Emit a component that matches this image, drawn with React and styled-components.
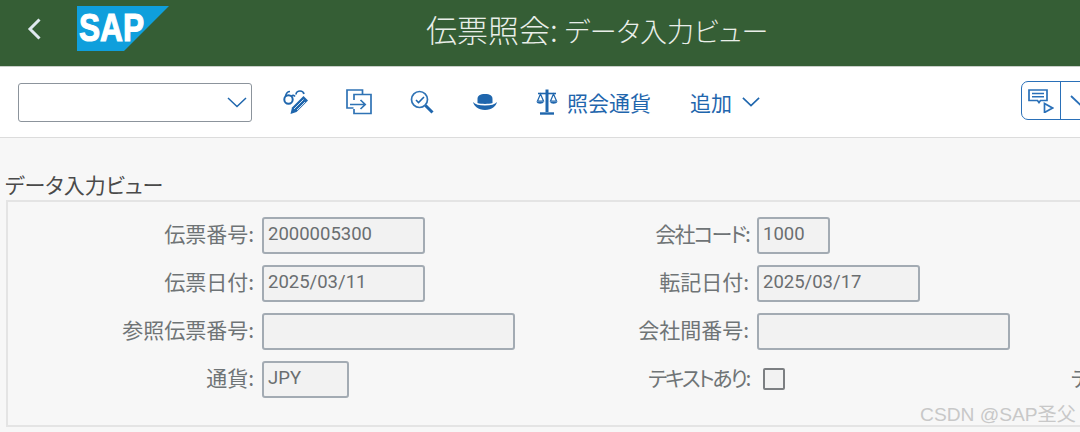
import React from "react";
import styled, { createGlobalStyle } from "styled-components";

const blue = "#1f66ad";
const jpFont = `"Noto Sans CJK JP", "Noto Sans", sans-serif`;

const GlobalStyle = createGlobalStyle`
  html, body {
    margin: 0;
    padding: 0;
    width: 1080px;
    height: 432px;
    overflow: hidden;
    background: #f7f7f7;
    font-family: ${jpFont};
    font-feature-settings: "palt";
  }
`;

const Page = styled.div`
  position: relative;
  width: 1080px;
  height: 432px;
  overflow: hidden;
`;

/* header */
const Header = styled.header`
  display: flex;
  align-items: flex-start;
  height: 66px;
  background: #355e35;
  border-bottom: 1px solid #c9cfc9;
`;

const BackButton = styled.button`
  display: flex;
  width: 36px;
  height: 30px;
  margin: 14px 0 0 16px;
  padding: 0;
  border: 0;
  background: none;
  align-items: center;
  justify-content: center;
`;

const Logo = styled.svg`
  display: block;
  width: 92px;
  height: 45px;
  margin: 6px 0 0 25px;
`;

const Title = styled.h1`
  margin: 9px 0 0 257px;
  font-size: 31px;
  line-height: 40px;
  font-weight: 300;
  color: #e9eee9;
  white-space: nowrap;
`;

const TitleKana = styled.span`
  font-size: 27px;
`;

/* toolbar */
const Toolbar = styled.div`
  display: flex;
  align-items: center;
  height: 70px;
  padding-left: 18px;
  background: #fff;
  border-bottom: 1px solid #dcdcdc;
`;

const Select = styled.div`
  display: flex;
  align-items: center;
  justify-content: flex-end;
  box-sizing: border-box;
  width: 234px;
  height: 39px;
  margin: 0 12px 0 0;
  padding-right: 4px;
  background: #fff;
  border: 1px solid #8c949c;
  border-radius: 3px;
`;

const IconButton = styled.button`
  display: flex;
  align-items: center;
  justify-content: center;
  width: 63px;
  height: 36px;
  padding: 0;
  border: 0;
  background: none;
`;

const TextButton = styled.button`
  display: flex;
  align-items: center;
  gap: ${(p) => p.$gap}px;
  margin-left: ${(p) => p.$left}px;
  padding: 0;
  border: 0;
  background: none;
  font-family: ${jpFont};
  font-size: 21px;
  line-height: 30px;
  color: ${blue};
  white-space: nowrap;
`;

const SplitButton = styled.div`
  display: flex;
  flex: none;
  box-sizing: border-box;
  width: 79px;
  height: 39px;
  margin: -3px -20px 0 auto;
  border: 1.5px solid #2a70b8;
  border-radius: 7px;
`;

const SplitPart = styled.div`
  display: flex;
  align-items: center;
  justify-content: center;
  width: 38px;
  & + & {
    border-left: 1.5px solid #2a70b8;
  }
`;

/* form */
const Content = styled.main`
  padding: 30px 0 0 6px;
`;

const SectionTitle = styled.h2`
  margin: 0 0 0 -1px;
  font-size: 21px;
  line-height: 32px;
  font-weight: 400;
  color: #4a4a4a;
  white-space: nowrap;
`;

const Panel = styled.section`
  box-sizing: border-box;
  width: 1090px;
  height: 227px;
  padding: 15px 0 0 0;
  border: 2px solid #e4e4e4;
  border-right: 0;
`;

const FormGrid = styled.div`
  display: grid;
  grid-template-columns: 246px 280px 215px 261px 120px;
  grid-auto-rows: 36px;
  row-gap: 12px;
`;

const Field = styled.div`
  display: flex;
  align-items: center;
  justify-content: flex-end;
  min-width: 0;
`;

const ClippedField = styled.div`
  display: flex;
  align-items: center;
  padding-left: 61px;
`;

const FieldSlot = styled.div`
  display: flex;
  align-items: center;
  padding-left: 8px;
`;

const Label = styled.span`
  padding-bottom: 4px;
  font-size: 21px;
  line-height: 30px;
  letter-spacing: ${(p) => p.$squeeze ?? 0}px;
  color: #6f7476;
  white-space: nowrap;
`;

const Input = styled.div`
  box-sizing: border-box;
  width: ${(p) => p.$width}px;
  height: 37px;
  padding-left: 4px;
  background: #f2f2f2;
  border: 2px solid #a3abb3;
  border-radius: 3px;
  font-family: Roboto, "Liberation Sans", sans-serif;
  font-size: 18.5px;
  line-height: 31px;
  color: #6a6e70;
  white-space: nowrap;
`;

const Checkbox = styled.span`
  display: block;
  box-sizing: border-box;
  width: 22px;
  height: 22px;
  margin-left: 6px;
  background: #f2f2f2;
  border: 2px solid #7c7f82;
  border-radius: 2px;
`;

const Watermark = styled.div`
  position: absolute;
  right: 4px;
  bottom: 5px;
  font-family: "Liberation Sans", "Noto Sans CJK SC", sans-serif;
  font-size: 19.2px;
  line-height: 24px;
  color: #c8c8c8;
  white-space: nowrap;
`;

const Chevron = ({ color = blue, w = 20, h = 11, weight = 1.5 }) => (
  <svg width={w} height={h} viewBox="0 0 20 11" fill="none">
    <path d="M1 1l9 8.500L19 1" stroke={color} strokeWidth={weight} />
  </svg>
);

const GlassesPen = () => (
  <svg width="26" height="26" viewBox="0 0 26 26" fill="none" stroke={blue}>
    <circle cx="5.500" cy="10.500" r="4.200" strokeWidth="2" />
    <path d="M8.500 7c1.200-1 2.500-1 3.500.500" strokeWidth="1.700" />
    <path d="M2.500 7.500C3 4.500 4.500 2.500 7 2.500M13 5.500c0-2 2-3.500 4-3.500 2 0 3.500 1 4 3" strokeWidth="1.700" />
    <path d="M7.500 25l1.500-6.500L20.500 7l4.500 4.500L13.500 23z" fill={blue} stroke="none" />
    <path d="M11 20l9.500-9.500M14 21l8-8" stroke="#fff" strokeWidth="0.800" />
  </svg>
);

const ExportBox = () => (
  <svg width="26" height="26" viewBox="0 0 26 26" fill="none" stroke="#2f73b5" strokeWidth="1.700">
    <path d="M16.500 5.500V1H1v18h6.500" />
    <path d="M8 11V5.500h17V24.500H8V20" />
    <path d="M4 15.500h15M14.500 11l4.700 4.500-4.700 4.500" />
  </svg>
);

const CheckLens = () => (
  <svg width="24" height="24" viewBox="0 0 24 24" fill="none" stroke={blue}>
    <circle cx="9.500" cy="9.500" r="8" strokeWidth="1.700" stroke="#2f73b5" />
    <path d="M6 10l2.500 2.500L14 7" strokeWidth="1.600" />
    <path d="M15.500 15.500L22.500 22.500" strokeWidth="3" />
  </svg>
);

const BowlerHat = () => (
  <svg width="24" height="16" viewBox="0 0 24 16" fill={blue}>
    <path d="M4.500 9V5C4.500 1.500 7 0 12 0s7.500 1.500 7.500 5v4c-4 1.200-11 1.200-15 0z" />
    <path d="M0 8c2 2.500 6 3.500 12 3.500S22 10.500 24 8c-1 4-5 8-12 8S1 12 0 8z" />
  </svg>
);

const Scales = () => (
  <svg width="22" height="28" viewBox="0 0 22 28" fill="none" stroke={blue}>
    <path d="M11 1.500V24" strokeWidth="3" />
    <path d="M4 25.500h14" strokeWidth="2.400" />
    <path d="M2 5.500h18" strokeWidth="1.600" />
    <path d="M4.500 6L1.500 13h6zM17.500 6l-3 7h6z" strokeWidth="1.200" />
    <path d="M.5 13.500c.5 3 6.500 3 7.500 0zM14 13.500c.5 3 6.500 3 7.500 0z" fill={blue} stroke="none" />
  </svg>
);

const CommentPlay = () => (
  <svg width="26" height="24" viewBox="0 0 26 24" fill="none" stroke="#2a70b8">
    <path d="M1 1h18v10.500h-6.500l-1.500 2-1.500-2H1z" strokeWidth="1.700" />
    <path d="M4 4.500h12M4 7.800h12" strokeWidth="1.500" />
    <path d="M16.500 14.500l8 4.500-8 4.500z" strokeWidth="1.700" />
  </svg>
);

const rows = [
  {
    left: ["伝票番号:", "2000005300", 163],
    right: ["会社コード:", "1000", 73, -1.9],
  },
  {
    left: ["伝票日付:", "2025/03/11", 163],
    right: ["転記日付:", "2025/03/17", 163],
  },
  {
    left: ["参照伝票番号:", "", 253],
    right: ["会社間番号:", "", 253],
  },
  {
    left: ["通貨:", "JPY", 87],
    right: ["テキストあり:", null, null, -2.3],
    extra: "テ",
  },
];

const App = () => {
  return (
    <Page>
      <GlobalStyle />
      <Header>
        <BackButton aria-label="戻る">
          <svg width="16" height="24" viewBox="0 0 16 24" fill="none">
            <path d="M13.500 2.500L4 12l9.500 9.500" stroke="#dfe9ef" strokeWidth="3" />
          </svg>
        </BackButton>
        <Logo viewBox="0 0 92 45" role="img" aria-label="SAP">
          <polygon points="0,0 92,0 47,45 0,45" fill="#0f9fdc" />
          <text
            x="2"
            y="35"
            fill="#fff"
            stroke="#fff"
            strokeWidth="1.200"
            fontFamily="Liberation Sans, sans-serif"
            fontSize="39"
            fontWeight="700"
            textLength="65"
            lengthAdjust="spacingAndGlyphs"
          >
            SAP
          </text>
        </Logo>
        <Title>
          伝票照会: <TitleKana>データ入力ビュー</TitleKana>
        </Title>
      </Header>

      <Toolbar>
        <Select>
          <Chevron />
        </Select>
        <IconButton aria-label="表示">
          <GlassesPen />
        </IconButton>
        <IconButton aria-label="エクスポート">
          <ExportBox />
        </IconButton>
        <IconButton aria-label="照会">
          <CheckLens />
        </IconButton>
        <IconButton aria-label="帽子">
          <BowlerHat />
        </IconButton>
        <TextButton $left={20} $gap={9}>
          <Scales />
          照会通貨
        </TextButton>
        <TextButton $left={39} $gap={10}>
          追加
          <Chevron w={18} h={10} weight={1.8} />
        </TextButton>
        <SplitButton>
          <SplitPart>
            <CommentPlay />
          </SplitPart>
          <SplitPart>
            <Chevron color="#2a70b8" weight={1.8} />
          </SplitPart>
        </SplitButton>
      </Toolbar>

      <Content>
        <SectionTitle>データ入力ビュー</SectionTitle>
        <Panel>
          <FormGrid>
            {rows.map((row) => (
              <React.Fragment key={row.left[0]}>
                <Field>
                  <Label>{row.left[0]}</Label>
                </Field>
                <FieldSlot>
                  <Input $width={row.left[2]}>{row.left[1]}</Input>
                </FieldSlot>
                <Field>
                  <Label $squeeze={row.right[3]}>{row.right[0]}</Label>
                </Field>
                <FieldSlot>
                  {row.right[2] ? (
                    <Input $width={row.right[2]}>{row.right[1]}</Input>
                  ) : (
                    <Checkbox />
                  )}
                </FieldSlot>
                <ClippedField>
                  {row.extra && <Label>{row.extra}</Label>}
                </ClippedField>
              </React.Fragment>
            ))}
          </FormGrid>
        </Panel>
      </Content>
      <Watermark>CSDN @SAP圣父</Watermark>
    </Page>
  );
};

export default App;
